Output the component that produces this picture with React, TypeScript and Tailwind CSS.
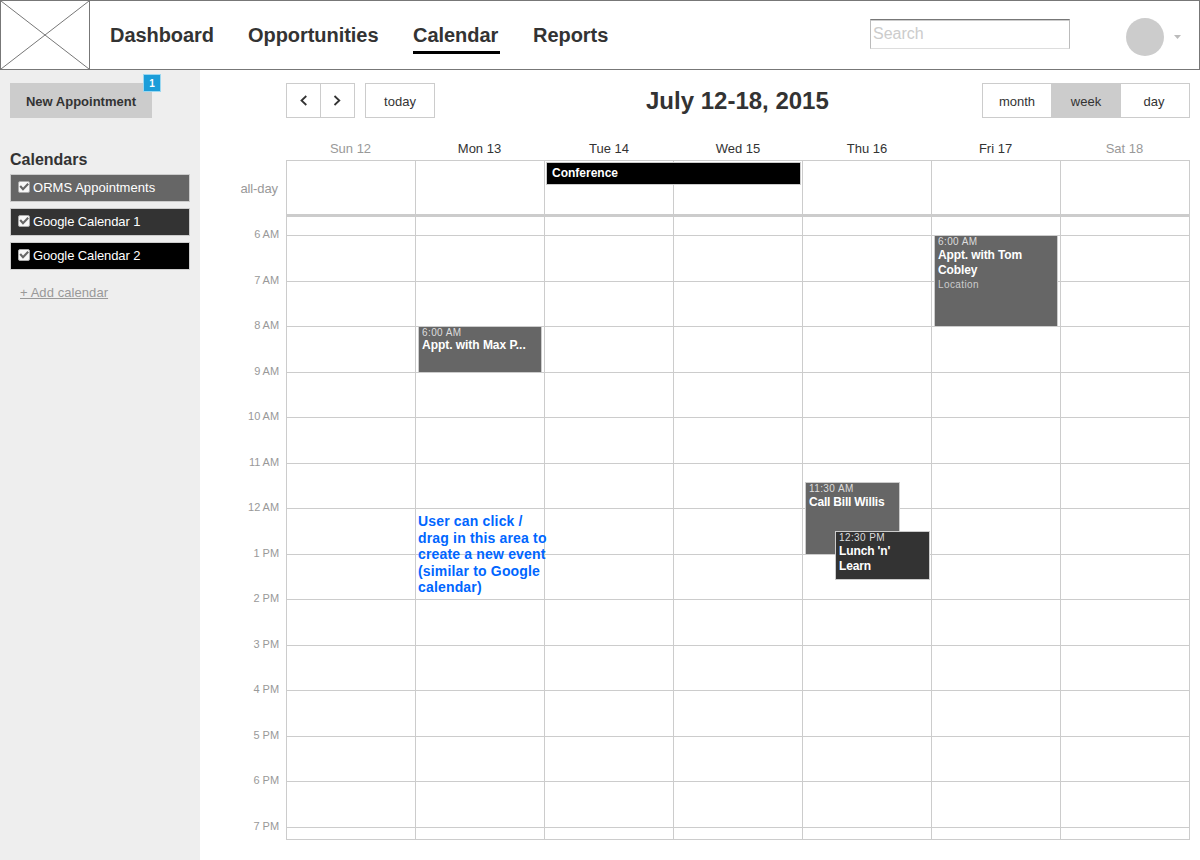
import React from "react";

const days = ["Sun 12", "Mon 13", "Tue 14", "Wed 15", "Thu 16", "Fri 17", "Sat 18"];
const hours = ["6 AM", "7 AM", "8 AM", "9 AM", "10 AM", "11 AM", "12 AM", "1 PM", "2 PM", "3 PM", "4 PM", "5 PM", "6 PM", "7 PM"];

function Check() {
  return (
    <svg width="12" height="12" viewBox="0 0 12 12" className="-mt-[2px] shrink-0">
      <rect x="0.5" y="0.5" width="11" height="11" rx="1.5" fill="#f7f7f7" stroke="#aaa" />
      <path d="M2.2 5 L5 8.2 L10.2 2.8" fill="none" stroke="#666" strokeWidth="2.1" />
    </svg>
  );
}

function CalendarItem({ label, tone, tracking }: { label: string; tone: string; tracking: string }) {
  return (
    <label className={`flex h-[28px] w-[180px] items-center gap-[3px] border border-[#ccc] pl-[7px] text-[13px] text-white ${tone}`}>
      <Check />
      <span className={`whitespace-nowrap ${tracking}`}>{label}</span>
    </label>
  );
}

function Event({ time, title, place, box }: { time: string; title: React.ReactNode; place?: string; box: string }) {
  return (
    <div className={`absolute overflow-hidden border border-[#ccc] pl-[3px] text-white ${box}`}>
      <div className="h-[12px] whitespace-nowrap text-[10px] leading-[12px] tracking-[0.4px] text-[#ddd]">{time}</div>
      <div className="whitespace-nowrap text-[12px] font-bold leading-[15px] tracking-[-0.12px]">{title}</div>
      {place && <div className="text-[10px] leading-[14px] tracking-[0.4px] text-[#ccc]">{place}</div>}
    </div>
  );
}

export default function App() {
  return (
    <div className="flex h-[860px] w-[1200px] flex-col overflow-hidden bg-white font-['Liberation_Sans',Arial,sans-serif] text-[13px] text-[#333]">
      <header className="flex h-[70px] shrink-0 border border-[#777]">
        <div className="h-[68px] w-[89px] shrink-0 border-r border-[#777]">
          <svg width="88" height="68" viewBox="0 0 88 68">
            <path d="M0 0 L88 68 M88 0 L0 68" stroke="#777" strokeWidth="1" fill="none" />
          </svg>
        </div>
        <nav className="flex pl-[20px] pt-[22px] text-[20px] font-bold leading-[24px] tracking-[-0.05px]">
          <a className="w-[138px]">Dashboard</a>
          <a className="w-[165px]">Opportunities</a>
          <a className="h-[31px] w-[87px] border-b-3 border-black">Calendar</a>
          <a className="ml-[33px]">Reports</a>
        </nav>
        <div className="ml-auto mt-[18px] h-[30px] w-[200px] border border-x-[#bbb] border-b-[#ddd] border-t-[#777] pl-[2px] text-[16px] leading-[27px] text-[#ccc] shadow-[inset_0_1px_0_#ccc]">Search</div>
        <div className="ml-[56px] mt-[17px] size-[38px] rounded-full bg-[#ccc]" />
        <svg width="7" height="4" viewBox="0 0 7 4" className="ml-[10px] mr-[18px] mt-[34px]">
          <path d="M0 0H7L3.5 4Z" fill="#bbb" />
        </svg>
      </header>

      <div className="flex min-h-0 flex-1">
        <aside className="w-[200px] shrink-0 bg-[#eee] px-[10px] pt-[13px]">
          <div className="relative h-[35px] w-[142px]">
            <button className="h-[35px] w-[142px] bg-[#ccc] pt-[2px] font-bold">New Appointment</button>
            <span className="absolute -top-[9px] left-[133px] flex size-[18px] items-center justify-center border border-[#9bd7f0] bg-[#1b9dd9] text-[10px] font-bold text-white">1</span>
          </div>
          <h2 className="mt-[32px] h-[24px] text-[16px] font-bold leading-[20px]">Calendars</h2>
          <div className="flex flex-col gap-[6px]">
            <CalendarItem label="ORMS Appointments" tone="bg-[#666]" tracking="tracking-[0.05px]" />
            <CalendarItem label="Google Calendar 1" tone="bg-[#333]" tracking="tracking-[-0.11px]" />
            <CalendarItem label="Google Calendar 2" tone="bg-black" tracking="tracking-[-0.11px]" />
          </div>
          <a className="mt-[15px] block pl-[10px] leading-[16px] tracking-[0.07px] text-[#999] underline">+ Add calendar</a>
        </aside>

        <main className="flex-1 pr-[10px] pt-[13px]">
          <div className="flex pl-[86px]">
            <div className="flex h-[35px] w-[69px] border border-[#ccc]">
              <button className="flex w-[34px] items-center justify-center border-r border-[#ccc]">
                <svg width="8" height="12" viewBox="0 0 8 12"><path d="M6.3 1 L1.5 5.5 L6.3 10" fill="none" stroke="#333" strokeWidth="1.8" /></svg>
              </button>
              <button className="flex w-[33px] items-center justify-center pr-px">
                <svg width="8" height="12" viewBox="0 0 8 12"><path d="M1.5 1 L6.3 5.5 L1.5 10" fill="none" stroke="#333" strokeWidth="1.8" /></svg>
              </button>
            </div>
            <button className="ml-[10px] h-[35px] w-[70px] border border-[#ccc] pt-[2px]">today</button>
            <h1 className="ml-[211px] text-[24px] font-bold leading-[36px]">July 12-18, 2015</h1>
            <div className="ml-auto flex h-[35px] w-[208px] border border-[#ccc]">
              <button className="w-[68px] pt-[2px]">month</button>
              <button className="w-[70px] bg-[#ccc] pt-[2px]">week</button>
              <button className="w-[68px] pr-[2px] pt-[2px]">day</button>
            </div>
          </div>

          <div className="mt-[21px] flex h-[20px] pl-[86px]">
            {days.map((d, i) => (
              <div key={d} className={`w-[129px] text-center leading-[17px] ${i === 0 || i === 6 ? "text-[#999]" : ""} ${i > 1 && i < 5 ? "pl-px" : ""}`}>{d}</div>
            ))}
          </div>

          <div className="flex">
            <div className="w-[86px] shrink-0 text-right text-[#999]">
              <div className="h-[67px] pr-[8px] pt-[20px] leading-[18px] tracking-[-0.1px]">all-day</div>
              {hours.map((h, i) => (
                <div key={i} className={`pr-[7px] text-[11px] leading-[15px] tracking-[-0.05px] ${i % 2 ? "h-[45px]" : "h-[46px]"}`}>{h}</div>
              ))}
            </div>
            <div className="relative h-[680px] w-[904px] shrink-0 border border-[#ccc]">
              <div className="flex h-[53px]">
                {days.map((d) => <div key={d} className="w-[129px] shrink-0 border-r border-[#ccc] last:w-[128px] last:border-0" />)}
              </div>
              <div className="h-[3px] bg-[#ccc]" />
              {["", ...hours].map((_, r) => (
                <div key={r} className={`flex ${r === 0 ? "h-[19px]" : r === 14 ? "h-[12px]" : r % 2 ? "h-[46px]" : "h-[45px]"} ${r < 14 ? "border-b border-[#ccc]" : ""}`}>
                  {days.map((d) => <div key={d} className="w-[129px] shrink-0 border-r border-[#ccc] last:w-[128px] last:border-0" />)}
                </div>
              ))}

              <div className="absolute left-[259px] top-px h-[23px] w-[255px] border border-[#ccc] bg-black pl-[5px] text-[12px] font-bold leading-[20px] text-white">Conference</div>
              <Event time="6:00 AM" title={<div className="-mt-px tracking-[-0.04px]">Appt. with Max P...</div>} box="left-[131px] top-[165px] h-[47px] w-[124px] bg-[#666]" />
              <Event time="6:00 AM" title={<>Appt. with Tom<br />Cobley</>} place="Location" box="left-[647px] top-[74px] h-[92px] w-[124px] bg-[#666]" />
              <Event time="11:30 AM" title={<div className="tracking-[-0.2px]">Call Bill Willis</div>} box="left-[518px] top-[321px] h-[73px] w-[95px] bg-[#666]" />
              <Event time="12:30 PM" title={<>Lunch 'n'<br />Learn</>} box="left-[548px] top-[370px] h-[49px] w-[95px] bg-[#333]" />
              <p className="absolute left-[131px] top-[352px] whitespace-nowrap text-[14px] font-bold leading-[16.5px] tracking-[0.17px] text-[#0066ff]">
                User can click /<br />drag in this area to<br />create a new event<br />(similar to Google<br />calendar)
              </p>
            </div>
          </div>
        </main>
      </div>
    </div>
  );
}
